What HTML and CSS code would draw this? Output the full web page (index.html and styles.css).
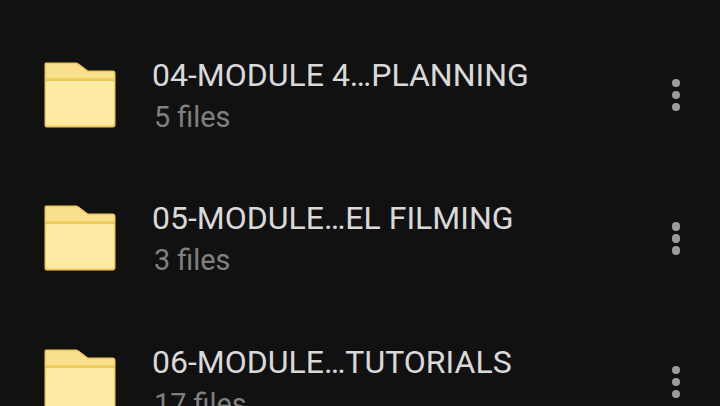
FILE: index.html
```html
<!DOCTYPE html>
<html lang="en">

<head>
    <meta charset="UTF-8">
    <title>Folders</title>
    <link rel="stylesheet" href="styles.css">
</head>

<body>
    <div class="list">

        <div class="row">
            <svg class="folder" viewBox="0 0 72 66">
                <path class="back" d="M3 .5H31C33 .5 34 1 36 2.5L44 8.500H68.500C70.500 8.500 71.500 9.500 71.500 11.500V62.500C71.500 64.500 70.500 65.500 68.500 65.500H3C1 65.500 .5 64.500 .5 62.500V3C.5 1 1 .5 3 .5Z"/>
                <path class="tab" d="M3 2H31C33 2 34 2.500 35.500 4L43.500 10H68C69.500 10 70 10.500 70 12V16.500H2V3C2 2.500 2.500 2 3 2Z"/>
                <rect class="fold" x="1" y="16.500" width="70" height="2.500"/>
                <rect class="body" x="2" y="19" width="68" height="44.500" rx="2"/>
            </svg>
            <div class="info">
                <p class="name">04-MODULE 4…PLANNING</p>
                <p class="count">5 files</p>
            </div>
            <div class="more"><span></span><span></span><span></span></div>
        </div>

        <div class="row">
            <svg class="folder" viewBox="0 0 72 66">
                <path class="back" d="M3 .5H31C33 .5 34 1 36 2.5L44 8.500H68.500C70.500 8.500 71.500 9.500 71.500 11.500V62.500C71.500 64.500 70.500 65.500 68.500 65.500H3C1 65.500 .5 64.500 .5 62.500V3C.5 1 1 .5 3 .5Z"/>
                <path class="tab" d="M3 2H31C33 2 34 2.500 35.500 4L43.500 10H68C69.500 10 70 10.500 70 12V16.500H2V3C2 2.500 2.500 2 3 2Z"/>
                <rect class="fold" x="1" y="16.500" width="70" height="2.500"/>
                <rect class="body" x="2" y="19" width="68" height="44.500" rx="2"/>
            </svg>
            <div class="info">
                <p class="name">05-MODULE…EL FILMING</p>
                <p class="count">3 files</p>
            </div>
            <div class="more"><span></span><span></span><span></span></div>
        </div>

        <div class="row">
            <svg class="folder" viewBox="0 0 72 66">
                <path class="back" d="M3 .5H31C33 .5 34 1 36 2.5L44 8.500H68.500C70.500 8.500 71.500 9.500 71.500 11.500V62.500C71.500 64.500 70.500 65.500 68.500 65.500H3C1 65.500 .5 64.500 .5 62.500V3C.5 1 1 .5 3 .5Z"/>
                <path class="tab" d="M3 2H31C33 2 34 2.500 35.500 4L43.500 10H68C69.500 10 70 10.500 70 12V16.500H2V3C2 2.500 2.500 2 3 2Z"/>
                <rect class="fold" x="1" y="16.500" width="70" height="2.500"/>
                <rect class="body" x="2" y="19" width="68" height="44.500" rx="2"/>
            </svg>
            <div class="info">
                <p class="name">06-MODULE…TUTORIALS</p>
                <p class="count">17 files</p>
            </div>
            <div class="more"><span></span><span></span><span></span></div>
        </div>

    </div>
</body>

</html>
```

FILE: styles.css
```css
html,
body {
    margin: 0;
    padding: 0;
    height: 100%;
    overflow: hidden;
    background-color: #111112;
}

p {
    margin: 0;
    padding: 0;
}

.list {
    height: 406px;
    padding-top: 23px;
    box-sizing: border-box;
    overflow: hidden;
    font-family: Roboto, "Liberation Sans", sans-serif;
}

.row {
    height: 143.500px;
    padding: 0 40px 0 44px;
    display: flex;
    align-items: center;
}

.folder {
    width: 72px;
    height: 66px;
    flex-shrink: 0;
}

.back {
    fill: #f0c95a;
}

.tab {
    fill: #f9e08f;
}

.fold {
    fill: #f0c955;
}

.body {
    fill: #fdeba6;
}

.info {
    flex: 1;
    margin-left: 36px;
}

.name {
    font-size: 32px;
    line-height: 38px;
    color: #d9d9d9;
}

.count {
    margin-top: 6px;
    margin-left: 2px;
    font-size: 28.800px;
    line-height: 34px;
    color: #808080;
}

.more {
    display: flex;
    flex-direction: column;
    gap: 3.500px;
}

.more span {
    width: 8.500px;
    height: 8.500px;
    border-radius: 50%;
    background-color: #9c9c9c;
}
```
